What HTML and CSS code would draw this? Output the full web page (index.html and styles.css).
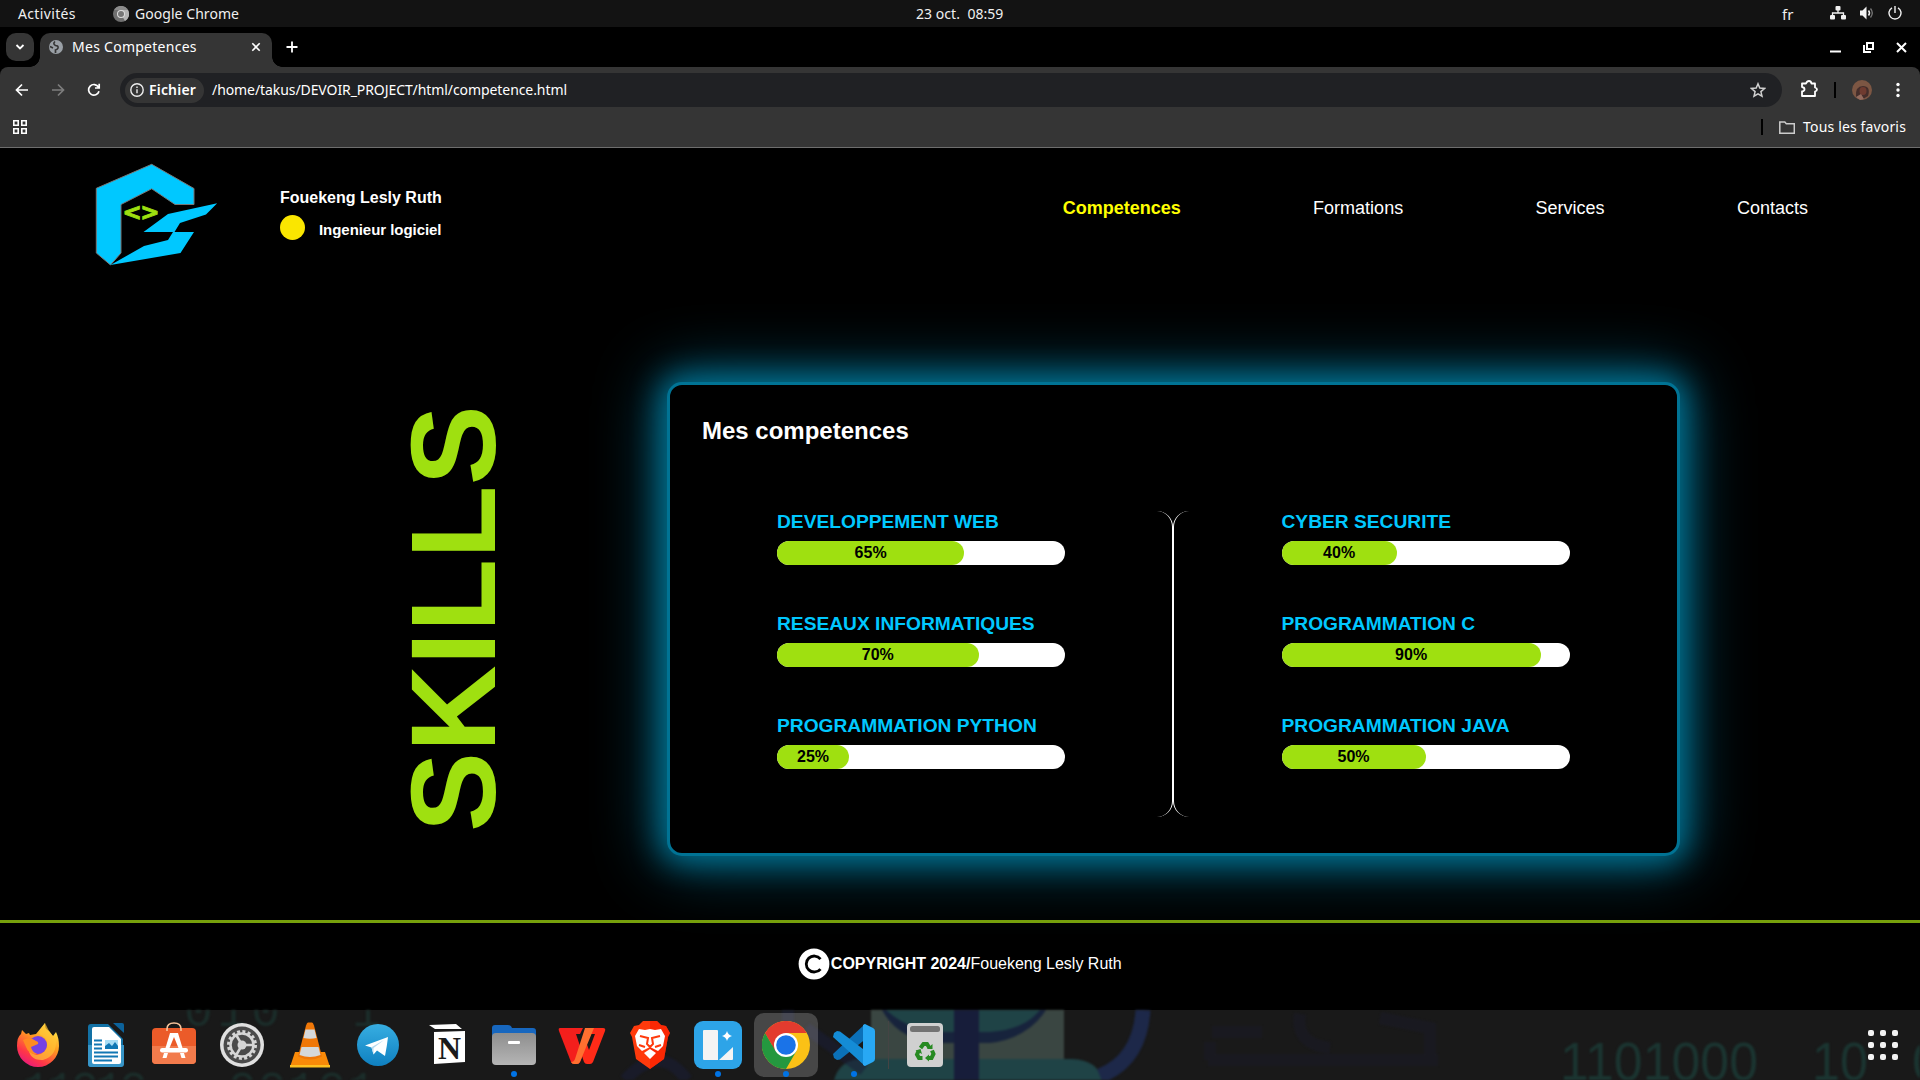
FILE: index.html
```html
<!DOCTYPE html>
<html lang="fr">
<head>
<meta charset="utf-8">
<title>Mes Competences</title>
<link rel="stylesheet" href="styles.css">
</head>
<body>
<div class="desktop">
  <header class="topbar">
    <span class="activities">Activités</span>
    <span class="app"><svg width="16" height="16" viewBox="0 0 16 16"><circle cx="8" cy="8" r="8" fill="#6f6f6f"/><path d="M8 8L12 15A8 8 0 0 0 15 4H8z" fill="#b5b5b5"/><path d="M1 4A8 8 0 0 1 15 4H8z" fill="#8b8b8b"/><circle cx="8" cy="8" r="4" fill="#ddd"/><circle cx="8" cy="8" r="3" fill="#777"/></svg><span class="app-name">Google Chrome</span></span>
    <span class="clock">23 oct.&nbsp; 08:59</span>
    <span class="lang">fr</span>
    <span class="tray">
      <svg width="16" height="14" viewBox="0 0 16 14" fill="#f2f2f2"><rect x="5.5" y="0" width="5" height="4.5" rx="1"/><rect x="0" y="9" width="5" height="4.5" rx="1"/><rect x="11" y="9" width="5" height="4.5" rx="1"/><path d="M8 4v3M2.5 10V7h11v3" fill="none" stroke="#f2f2f2" stroke-width="1.3"/></svg>
      <svg width="16" height="14" viewBox="0 0 16 14"><path d="M1 4.5h2.5L7.500.5v13L3.500 9.500H1z" fill="#f2f2f2"/><path d="M9.500 4.500q2 2.500 0 5" fill="none" stroke="#f2f2f2" stroke-width="1.500"/><path d="M11.500 2.500q3.600 4.500 0 9" fill="none" stroke="#777" stroke-width="1.300"/></svg>
      <svg width="14" height="14" viewBox="0 0 14 14" fill="none" stroke="#f2f2f2" stroke-width="1.400"><path d="M7 0v7M4 1.800a6 6 0 1 0 6 0"/></svg>
    </span>
  </header>

  <div class="tabstrip">
    <div class="tab-search"><svg width="10" height="10" viewBox="0 0 10 10" fill="none" stroke="#fff" stroke-width="1.800"><path d="M1.500 3l3.500 3.500L8.500 3"/></svg></div>
    <div class="tab">
      <svg width="14" height="14" viewBox="0 0 14 14"><circle cx="7" cy="7" r="7" fill="#9aa0a6"/><path d="M6 1.500Q3.500 4 6.500 5.500q3 0 2.500 2.500-.5 1.500-2.500 2v3M1 6.500l3 1.500" fill="none" stroke="#353535" stroke-width="1.700"/></svg>
      <span class="tab-title">Mes Competences</span>
      <svg class="tab-close" width="10" height="10" viewBox="0 0 10 10" stroke="#fff" stroke-width="1.600"><path d="M1.300 1.300l7.400 7.400M8.700 1.300l-7.400 7.400"/></svg>
    </div>
    <svg class="new-tab" width="12" height="12" viewBox="0 0 12 12" stroke="#fff" stroke-width="1.800"><path d="M6 .5v11M.5 6h11"/></svg>
    <div class="window-buttons">
      <svg width="11" height="11" viewBox="0 0 11 11"><path d="M0 9.500h11" stroke="#fff" stroke-width="2"/></svg>
      <svg width="11" height="11" viewBox="0 0 11 11" fill="none" stroke="#fff" stroke-width="2"><path d="M4 1h6v6H4zM1 3v7h7"/></svg>
      <svg width="11" height="11" viewBox="0 0 11 11" stroke="#fff" stroke-width="2"><path d="M1 1l9 9M10 1l-9 9"/></svg>
    </div>
  </div>

  <div class="toolbar">
    <div class="nav-row">
      <svg class="nav-icon" width="14" height="14" viewBox="0 0 14 14" fill="none" stroke="#fff" stroke-width="1.700"><path d="M13 7H1.800M7 1.500L1.500 7 7 12.500"/></svg>
      <svg class="nav-icon" width="14" height="14" viewBox="0 0 14 14" fill="none" stroke="#7d7d7d" stroke-width="1.700"><path d="M1 7h11.200M7 1.500L12.500 7 7 12.500"/></svg>
      <svg class="nav-icon" width="14" height="14" viewBox="0 0 14 14" fill="none" stroke="#fff" stroke-width="1.700"><path d="M12 8.200A5.300 5.300 0 1 1 11.500 4.200M12.200.8v4.200H8"/></svg>
      <div class="omnibox">
        <div class="chip"><svg width="14" height="14" viewBox="0 0 14 14" fill="none" stroke="#eee" stroke-width="1.400"><circle cx="7" cy="7" r="6.200"/><path d="M7 6.200v4M7 3.500v1.500"/></svg><span class="chip-text">Fichier</span></div>
        <span class="url">/home/takus/DEVOIR_PROJECT/html/competence.html</span>
        <svg class="star" width="16" height="16" viewBox="0 0 16 16" fill="none" stroke="#d0d0d0" stroke-width="1.500"><path d="M8 1.800l1.800 4.300 4.700.4-3.600 3.100 1.100 4.600L8 11.800l-4 2.400 1.100-4.600L1.500 6.500l4.700-.4z"/></svg>
      </div>
      <svg class="puzzle" width="18" height="18" viewBox="0 0 18 18" fill="none" stroke="#fff" stroke-width="1.800" stroke-linejoin="round"><path d="M2 3.500h4q1-2.500 3-2.500t2.500 2.500h3.500v4q2 .5 2 2t-2 2v4.500H2v-4.500q2.500-.5 2.500-2.300T2 7z"/></svg>
      <span class="bar-sep"></span>
      <svg class="avatar" width="20" height="20" viewBox="0 0 20 20"><circle cx="10" cy="10" r="10" fill="#7c5643"/><path d="M4 17Q3 6 11 6t5 10l-5 3z" fill="#452e2b"/><ellipse cx="11" cy="11" rx="3.500" ry="4" fill="#6f3b30"/><path d="M4 17l5-3 3 5-4 1z" fill="#936b5e"/></svg>
      <svg class="menu-dots" width="4" height="16" viewBox="0 0 4 16" fill="#fff"><circle cx="2" cy="2.500" r="1.700"/><circle cx="2" cy="8" r="1.700"/><circle cx="2" cy="13.500" r="1.700"/></svg>
    </div>
    <div class="bookmarks">
      <svg width="14" height="14" viewBox="0 0 14 14" fill="none" stroke="#fff" stroke-width="1.600"><path d="M.8.8h4.400v4.400H.8zM8.800.8h4.400v4.400H8.800zM.8 8.800h4.400v4.400H.8zM8.800 8.800h4.400v4.400H8.800z"/></svg>
      <span class="bar-sep bm-sep"></span>
      <svg width="16" height="13" viewBox="0 0 16 13" fill="none" stroke="#ccc" stroke-width="1.500"><path d="M.8 1h5l1.500 1.700h8v9.500H.8z"/></svg>
      <span class="bm-text">Tous les favoris</span>
    </div>
  </div>

  <main class="page">
    <div class="site-header">
      <svg class="logo" width="124" height="104" viewBox="95 163 124 104">
        <g stroke="#777" stroke-width="1"><path d="M96.300 188.300L151.700 164.300 194 188.500V204.500H175L151.700 188.800 121 204.500V253L110.500 265 96.300 253z" fill="#00c8ff"/></g>
        <path d="M217.200 203.200L206 214.500 180 223 174.500 232H194L180.500 253 110.500 265 144 246 168 240 173 232H143.500L168 214z" fill="#00c8ff"/>
        <text class="logo-code" x="122.500" y="219.500" textLength="37">&lt;&gt;</text>
      </svg>
      <div class="owner">
        <div class="owner-name">Fouekeng Lesly Ruth</div>
        <div class="owner-role"><span class="dot"></span><span class="role-text">Ingenieur logiciel</span></div>
      </div>
      <nav class="menu"><a class="active">Competences</a><a>Formations</a><a>Services</a><a>Contacts</a></nav>
    </div>

    <section class="content">
      <h1 class="side-title">SKILLS</h1>
      <div class="card">
        <h2 class="card-title">Mes competences</h2>
        <div class="columns">
          <div class="column left">
            <div class="skill"><h3>DEVELOPPEMENT WEB</h3><div class="bar"><div class="fill" style="width:65%">65%</div></div></div>
            <div class="skill"><h3>RESEAUX INFORMATIQUES</h3><div class="bar"><div class="fill" style="width:70%">70%</div></div></div>
            <div class="skill"><h3>PROGRAMMATION PYTHON</h3><div class="bar"><div class="fill" style="width:25%">25%</div></div></div>
          </div>
          <div class="column right">
            <div class="skill"><h3>CYBER SECURITE</h3><div class="bar"><div class="fill" style="width:40%">40%</div></div></div>
            <div class="skill"><h3>PROGRAMMATION C</h3><div class="bar"><div class="fill" style="width:90%">90%</div></div></div>
            <div class="skill"><h3>PROGRAMMATION JAVA</h3><div class="bar"><div class="fill" style="width:50%">50%</div></div></div>
          </div>
        </div>
      </div>
    </section>

    <footer class="footer">
      <svg width="32" height="32" viewBox="0 0 32 32"><circle cx="16" cy="16" r="15.400" fill="#fff"/><path d="M22.500 11A8 8 0 1 0 22.500 21" fill="none" stroke="#000" stroke-width="2.800"/></svg>
      <span><b>COPYRIGHT 2024/</b>Fouekeng Lesly Ruth</span>
    </footer>
  </main>

  <div class="dock">
    <svg class="wallpaper" width="1920" height="70" viewBox="0 0 1920 70">
      <g class="digits">
        <text x="184" y="16" textLength="96">010</text><text x="352" y="16">1</text>
        <text x="22" y="95" textLength="126">11010</text><text x="228" y="95" textLength="148">00101</text>
        <text class="tall" x="1560" y="70" textLength="198" lengthAdjust="spacingAndGlyphs">1101000</text><text class="tall" x="1812" y="70" textLength="56" lengthAdjust="spacingAndGlyphs">10</text><text class="tall" x="1912" y="70">0</text>
      </g>
      <g><path d="M871 0H1064V52H871z" fill="#3a4642"/><path d="M882 0Q900 33 944 33H990Q1028 28 1046 0z" fill="#17233c"/><path d="M886 0Q910 22 944 22H990Q1024 20 1040 0z" fill="#1f4346"/><path d="M834 70Q840 49 862 49H1072Q1098 50 1102 70z" fill="#1f4346"/><path d="M954 0h25v70h-25z" fill="#171d3a"/><path d="M1143 0Q1140 50 1100 66" fill="none" stroke="#1d2849" stroke-width="15"/></g>
      <path d="M806 18L864 60M625 70q35-38 62 0M788 0v18" fill="none" stroke="#1a1d36" stroke-width="12" opacity=".55"/>
      <path d="M1212 22h50M1208 50h230M1210 32v18M1300 4q-5 30 30 34M1380 8l50 10v30" fill="none" stroke="#1a1b2b" stroke-width="12" opacity=".45"/>
    </svg>
    <div class="dock-items">
      <div class="dock-item"><svg width="48" height="48" viewBox="0 0 48 48"><defs><linearGradient id="ff" x1=".8" y1="0" x2=".2" y2="1"><stop offset="0" stop-color="#fff44f"/><stop offset=".4" stop-color="#ff9a20"/><stop offset=".75" stop-color="#ff3647"/><stop offset="1" stop-color="#e31587"/></linearGradient></defs><path d="M31 2q-1 5 4 8l4 5 3-4q3 6 3 14a21 21 0 0 1-42 0q0-9 4-12l1-4 4 4 3-1 1 2 6-1z" fill="url(#ff)"/><path d="M31 2q-4 5-6 11 9 3 8 12-2 8-10 9-8-1-9-9 1 15 15 14 14-4 13-20L35 10z" fill="#ffc334" opacity=".7"/><circle cx="24" cy="24" r="9" fill="#7542e5"/><path d="M9 19q7-4 13 1 3 1 2 3l-7 3q1 5 6 7-8 1-11-7z" fill="#ff8b22"/></svg></div>
      <div class="dock-item"><svg width="48" height="48" viewBox="0 0 48 48"><path d="M9 3h17l15 15v25q0 3-3 3H9q-3 0-3-3V6q0-3 3-3z" fill="#1271a5"/><path d="M6 24h36v19q0 3-3 3H9q-3 0-3-3z" fill="#3795c7"/><path d="M31 2h9q2 0 2 2v8z" fill="#0c629b"/><path d="M12 6h15l12 12v23q0 2-2 2H12q-2 0-2-2V8q0-2 2-2z" fill="#fff"/><path d="M12 19.500h8M12 23.500h8M12 27.500h8M12 31.500h24M12 35.500h24M12 39.500h18" stroke="#1177b4" stroke-width="2"/><rect x="23" y="19" width="13" height="9" fill="#a9ddf5"/><path d="M23 28v-3l4-3 3 3 3-4 3 4v3z" fill="#1177b4"/></svg></div>
      <div class="dock-item"><svg width="48" height="48" viewBox="0 0 48 48"><rect x="2" y="7" width="44" height="36" rx="4" fill="#eb5b29"/><path d="M2 25h44v14q0 4-4 4H6q-4 0-4-4z" fill="#f27b4c"/><path d="M17 10V8q0-6 7-6t7 6v2" fill="none" stroke="#f8c49b" stroke-width="1.600"/><path d="M20 12h8l4.500 15h-4L24 16l-4.500 11h-4zM14 32h4l-1.500 5h-4zM30 32h4l1.500 5h-4z" fill="#fff"/><rect x="10" y="27" width="28" height="4.500" rx="2.200" fill="#fff"/></svg></div>
      <div class="dock-item"><svg width="48" height="48" viewBox="0 0 48 48"><circle cx="24" cy="24" r="22" fill="#e0e0e0"/><circle cx="24" cy="24" r="18.500" fill="#4a4a4a"/><circle cx="24" cy="24" r="13.500" fill="none" stroke="#d5d5d5" stroke-width="3" stroke-dasharray="3 2.300"/><circle cx="24" cy="24" r="11.500" fill="none" stroke="#d5d5d5" stroke-width="2.500"/><circle cx="24" cy="24" r="4.500" fill="#d5d5d5"/><path d="M24 24h11M24 24l-5.500-9.500M24 24l-5.500 9.500" stroke="#d5d5d5" stroke-width="2.500"/></svg></div>
      <div class="dock-item"><svg width="48" height="48" viewBox="0 0 48 48"><path d="M9 31h30l5 15H4z" fill="#f98a08"/><path d="M4 44h40v2.500H4z" fill="#ffc020"/><path d="M22 1.500h4q1 0 2 3l8 31q-12 6-24 0l8-31q1-3 2-3z" fill="#ef7707"/><path d="M19.500 8.500h9l2 8.500q-6.500 1.500-13 0zM15.500 26h17l2 8q-10.500 4-21 0z" fill="#d5d8d9"/></svg></div>
      <div class="dock-item"><svg width="48" height="48" viewBox="0 0 48 48"><defs><linearGradient id="tg" x2="0" y2="1"><stop stop-color="#37aee2"/><stop offset="1" stop-color="#0f80c0"/></linearGradient></defs><circle cx="24" cy="24" r="21" fill="url(#tg)"/><path d="M11 24.500L34 16q-1 9-3 19l-8-5.500-3.500 4-2-7z" fill="#fff"/><path d="M19.500 33.500l0-6.500L30 19 17.500 26.300z" fill="#b5d9ee"/></svg></div>
      <div class="dock-item"><svg width="48" height="48" viewBox="0 0 48 48"><path d="M7 4l27-1 6 5H13zM12 11l31-1v31l-31 2z" fill="#fff"/><text class="notion-n" x="16" y="37.500" textLength="23" lengthAdjust="spacingAndGlyphs">N</text></svg></div>
      <div class="dock-item"><svg width="48" height="48" viewBox="0 0 48 48"><path d="M2 24V7q0-3 3-3h13q3 0 4 3h21q3 0 3 3v14z" fill="#1767bf"/><defs><linearGradient id="fl" x2="0" y2="1"><stop stop-color="#8e8e8e"/><stop offset="1" stop-color="#b5b5b5"/></linearGradient></defs><rect x="2" y="12" width="44" height="32" rx="4" fill="url(#fl)"/><rect x="18" y="20" width="12" height="3" rx="1" fill="#fff"/></svg><i class="run-dot"></i></div>
      <div class="dock-item"><svg width="48" height="48" viewBox="0 0 48 48"><path d="M2 7h14l9 27-3 7q-1 2-3 2h-3q-2 0-3-2L1 10q-1-3 1-3z" fill="#f41f1c"/><path d="M2 7h23l-3 6H12z" fill="#f41f1c"/><path d="M32 7h13q3 0 2 3L35 41q-1 2-3 2h-3q-2 0-3-2l-4-12 5-11 4 11 6-16h-7z" fill="#ff2b18"/><path d="M27 7h9L22 41q-1 2-3 2h-3q-2 0-3-2 3 0 4-3z" fill="#ff7030"/></svg></div>
      <div class="dock-item"><svg width="48" height="48" viewBox="0 0 48 48"><path d="M17 0h14l4 4 5 1 4 7-2 4-4 22-14 10L10 38 6 16 4 12l4-7 5-1z" fill="#ff3a0c"/><path d="M24 0h7l4 4 5 1 4 7-2 4-4 22-14 10z" fill="#f91d00" opacity=".6"/><path d="M13 8l6 1 5-1 5 1 6-1 4 7-2 10-5 5-8-4-8 4-5-5-2-10zM24 28l6 4-6 6-6-6z" fill="#fff"/><path d="M14 15l8 2-1 6 3 3 3-3-1-6 8-2M13 24l6 2M35 24l-6 2" fill="none" stroke="#ff3a0c" stroke-width="2"/></svg></div>
      <div class="dock-item"><svg width="48" height="48" viewBox="0 0 48 48"><rect width="48" height="48" rx="9" fill="#2da4e8"/><path d="M10 9h13q1 0 1 1v29H10q-1 0-1-1V10q0-1 1-1zM39 26v12q0 1-1 1H25z" fill="#f4f4f4"/><path d="M33 10q1 4 5 5-4 1-5 5-1-4-5-5 4-1 5-5z" fill="#fff"/></svg><i class="run-dot"></i></div>
      <div class="dock-item"><div class="tile"><svg width="48" height="48" viewBox="0 0 48 48"><circle cx="24" cy="24" r="24" fill="#fbc116"/><path d="M3.200 12A24 24 0 0 1 44.800 12H24L13.600 30z" fill="#e33b2e"/><path d="M3.200 12A24 24 0 0 0 24 48L34.400 30 24 24H10z" fill="#24983f"/><path d="M3.200 12L13.600 30 24 24V12z" fill="#e33b2e"/><circle cx="24" cy="24" r="12" fill="#fff"/><circle cx="24" cy="24" r="9.800" fill="#1a73e8"/></svg></div><i class="run-dot"></i></div>
      <div class="dock-item"><svg width="48" height="48" viewBox="0 0 48 48"><path d="M35 3L3 33l1 4 3 2 3-.500 25-20z" fill="#0b70b8"/><path d="M35 45L3 16l1-4 3-2 3 .5 25 19z" fill="#148cd6"/><path d="M35 3l8 4q2 1 2 3v28q0 2-2 3l-8 4-2-1V4z" fill="#28a8f4"/></svg><i class="run-dot"></i></div>
      <span class="dock-sep"></span>
      <div class="dock-item"><svg width="48" height="48" viewBox="0 0 48 48"><rect x="6" y="2" width="36" height="44" rx="4" fill="#d0d0d0"/><rect x="9" y="5" width="30" height="6" rx="2.500" fill="#737373"/><g fill="none" stroke="#278a22" stroke-width="4"><path d="M19.500 27L22.500 23h3.500l2.500 4M31 29.500l1.500 3.500-2 4H27M21.500 37H18l-2-3.500 1.500-3.500"/></g><path d="M26 28h5.500v-5zM28 33.500v7l-4-3.500zM14.500 29.500l5-1.500 1.500 5z" fill="#278a22"/></svg></div>
      <svg class="app-grid" width="32" height="30" viewBox="0 0 32 30" fill="#f3f3f3"><g id="grid-row"><rect width="6" height="6" rx="2"/><rect x="12" width="6" height="6" rx="2"/><rect x="24" width="6" height="6" rx="2"/></g><use href="#grid-row" y="12"/><use href="#grid-row" y="24"/></svg>
    </div>
  </div>
</div>
</body>
</html>
```
FILE: styles.css
```css
* { box-sizing: border-box; }
body { margin: 0; background: #000; color: #fff; font-family: "Liberation Sans", Arial, sans-serif; overflow: hidden; }
h1, h2, h3 { margin: 0; }
svg { display: block; flex: none; }
.desktop { width: 1920px; height: 1080px; display: flex; flex-direction: column; overflow: hidden; }
.topbar, .tabstrip, .toolbar { font-family: "Noto Sans", sans-serif; font-size: 14px; flex: none; white-space: nowrap; }

/* system bar */
.topbar { height: 27px; background: #131313; display: grid; grid-template-columns: 95px 803px 866px 49px 1fr; align-items: center; padding-left: 18px; color: #f0f0f0; }
.app { display: flex; align-items: center; gap: 6px; }
.activities { letter-spacing: .35px; }
.app-name { letter-spacing: .05px; }
.clock { font-size: 14px; letter-spacing: .05px; }
.lang { font-size: 15px; }
.tray { display: flex; align-items: center; gap: 13px; margin: -2px 0 0 -1px; }

/* tabs */
.tabstrip { height: 40px; background: #000; display: flex; align-items: center; padding: 0 13px 0 6px; }
.tab-search { width: 28px; height: 28px; border-radius: 10px; background: #353535; display: flex; align-items: center; justify-content: center; }
.tab { position: relative; align-self: flex-end; width: 232px; height: 34px; margin-left: 6px; border-radius: 10px 10px 0 0; background: #353535; display: flex; align-items: center; padding: 0 11px 6px 9px; }
.tab::before, .tab::after { content: ""; position: absolute; bottom: 0; width: 10px; height: 10px; }
.tab::before { left: -10px; background: radial-gradient(circle at 0 0, transparent 9.500px, #353535 10px); }
.tab::after { right: -10px; background: radial-gradient(circle at 100% 0, transparent 9.500px, #353535 10px); }
.tab-title { margin: -1px 0 0 9px; letter-spacing: .27px; }
.tab-close { margin-left: auto; }
.new-tab { margin-left: 14px; }
.window-buttons { margin-left: auto; display: flex; gap: 22px; }

/* toolbar */
.toolbar { height: 81px; background: #353535; border-bottom: 1px solid #6e6e6e; border-radius: 8px 8px 0 0; }
.nav-row { height: 46px; display: flex; align-items: center; padding: 0 20px 0 15px; }
.nav-icon { margin-right: 22px; }
.omnibox { width: 1662px; height: 34px; margin-left: -3px; border-radius: 17px; background: #202124; display: flex; align-items: center; padding: 0 16px 0 5px; }
.chip { width: 79px; height: 25px; border-radius: 13px; background: #353535; display: flex; align-items: center; gap: 5px; padding-left: 5px; font-weight: 600; }
.chip-text { margin-top: -2px; letter-spacing: .2px; }
.url { margin: -2px 0 0 8px; letter-spacing: -.08px; }
.star { margin-left: auto; }
.puzzle { margin-left: 18px; margin-top: -2px; }
.bar-sep { width: 2px; height: 16px; background: #000; margin-left: 16px; }
.avatar { margin-left: 16px; }
.menu-dots { margin-left: auto; }
.bookmarks { height: 28px; display: flex; align-items: center; padding: 0 14px 0 13px; }
.bm-sep { margin-left: auto; margin-right: 16px; }
.bm-text { margin: -2px 0 0 8px; letter-spacing: .15px; }

/* page */
.page { height: 862px; flex: none; display: flex; flex-direction: column; background: #000; }
.site-header { height: 120px; flex: none; display: flex; padding-left: 95px; padding-right: 112px; }
.logo { margin-top: 15px; }
.logo-code { font: bold 23px "DejaVu Sans", sans-serif; fill: #9fe010; stroke: #9fe010; stroke-width: .9px; }
.owner { margin-left: 61px; width: 170px; padding-top: 41px; font-weight: bold; font-size: 16px; line-height: 18px; white-space: nowrap; }
.owner-role { display: flex; gap: 14px; font-size: 15px; margin-top: 8px; align-items: center; height: 25px; }
.role-text { margin-top: 4px; letter-spacing: -.05px; }
.dot { width: 25px; height: 25px; border-radius: 50%; background: #fae600; }
.menu { margin-left: auto; display: flex; gap: 132.400px; font-size: 18px; padding-top: 50px; }
.active { color: #ff0; font-weight: bold; }

.content { height: 652px; flex: none; display: flex; padding: 114px 0 0 393px; }
.side-title { width: 120px; height: 474px; writing-mode: vertical-rl; transform: rotate(180deg); font-size: 120px; line-height: 120px; text-align: center; color: #9fe010; }
.card { margin-left: 154px; width: 1013px; height: 474px; border: 3px solid #007394; border-radius: 15px; background: #000; box-shadow: 0 0 30px 5px #007394, 0 0 65px 7px rgba(0,115,148,.75); }
.card-title { font-size: 24px; line-height: 28px; margin: 32px 0 0 32px; }
.columns { display: grid; grid-template-columns: 503px 504px; margin-top: 66px; height: 306px; }
.column { display: flex; flex-direction: column; gap: 54px; align-items: center; border-radius: 16px; }
.left { border-right: 1px solid #fff; }
.right { border-left: 1px solid #fff; }
.skill { width: 288px; height: 48px; flex: none; }
.skill h3 { font-size: 19.200px; line-height: 22px; height: 30px; color: #00c8ff; white-space: nowrap; }
.bar { height: 24px; border-radius: 12px; background: #fff; }
.fill { height: 24px; border-radius: 12px; background: #9fe010; color: #000; font-size: 16px; font-weight: bold; line-height: 23px; text-align: center; }

.footer { flex: 1; border-top: 3px solid #76a00c; display: flex; align-items: flex-start; justify-content: center; padding-top: 25px; font-size: 16px; }
.footer span { line-height: 31px; margin-left: .5px; }

/* dock */
.dock { height: 70px; flex: none; position: relative; background: #191919; }
.wallpaper { position: absolute; left: 0; top: 0; filter: blur(1px); }
.digits text { font: 48px "Liberation Mono", monospace; fill: #1b2d2a; }
.digits .tall { font: 54px "Liberation Sans", sans-serif; fill: #1b3531; }
.dock-items { position: relative; height: 70px; display: flex; align-items: center; padding: 0 20px 0 4px; }
.dock-item { width: 68px; height: 70px; display: flex; align-items: center; justify-content: center; position: relative; }
.tile { width: 64px; height: 64px; border-radius: 10px; background: rgba(255,255,255,.2); display: flex; align-items: center; justify-content: center; }
.run-dot { position: absolute; left: 31px; top: 61px; width: 6px; height: 6px; border-radius: 50%; background: #0073e5; }
.dock-sep { width: 1px; height: 48px; background: #444; margin-right: 2px; }
.notion-n { font: bold 31px "Liberation Serif", serif; fill: #1a1a1a; }
.app-grid { margin-left: auto; }
```
